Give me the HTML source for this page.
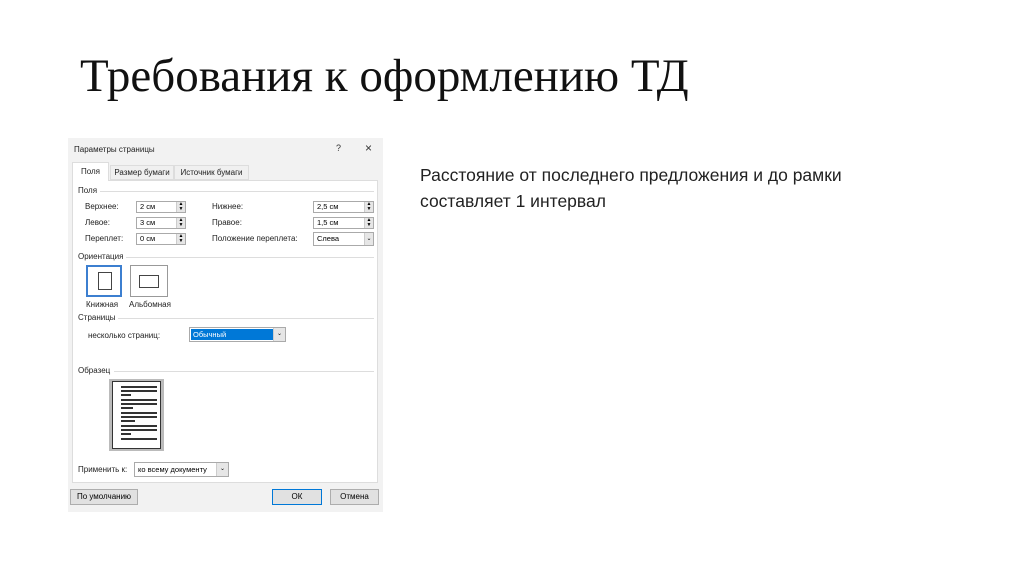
<!DOCTYPE html>
<html><head><meta charset="utf-8"><style>
body{margin:0;width:1024px;height:574px;background:#fff;position:relative;overflow:hidden;font-family:"Liberation Sans",sans-serif}
.a{position:absolute;white-space:nowrap}
h1{position:absolute;left:80px;top:49px;margin:0;font:47px "Liberation Serif",serif;color:#111;white-space:nowrap}
.d{font-size:8px;color:#222}
.inp{position:absolute;background:#fff;border:1px solid #aaa;height:12px;box-sizing:border-box;font-size:7.5px;padding-left:3px;line-height:10px}
.sp{position:absolute;right:0;top:0;width:8px;height:10px;background:#e6e6e6;border-left:1px solid #ccc;font-size:5px;line-height:5px;text-align:center}
.ln{position:absolute;height:1px;background:#ddd}
.btn{position:absolute;background:#e1e1e1;border:1px solid #adadad;box-sizing:border-box;font-size:8px;text-align:center;line-height:14px;height:16px}
.pl{position:absolute;height:2px;background:#333}
</style></head><body>
<h1>Требования к оформлению ТД</h1>
<div class="a" style="left:420px;top:162px;font-size:17.5px;color:#222;line-height:26px">Расстояние от последнего предложения и до рамки<br>составляет 1 интервал</div>

<div class="a" style="left:68px;top:138px;width:315px;height:374px;background:#f2f2f2"></div>
<div class="a d" style="left:74px;top:145px">Параметры страницы</div>
<div class="a" style="left:336px;top:143px;font-size:9px;color:#333">?</div>
<div class="a" style="left:365px;top:141px;font-size:12px;color:#333">×</div>
<div class="a" style="left:72px;top:180px;width:306px;height:303px;background:#fff;border:1px solid #ddd;box-sizing:border-box"></div>
<div class="a d" style="left:72px;top:162px;width:37px;height:19px;background:#fff;border:1px solid #ddd;border-bottom:none;box-sizing:border-box;text-align:center;line-height:18px">Поля</div>
<div class="a d" style="left:110px;top:165px;width:64px;height:15px;background:#f0f0f0;border:1px solid #ddd;box-sizing:border-box;text-align:center;line-height:13px">Размер бумаги</div>
<div class="a d" style="left:174px;top:165px;width:75px;height:15px;background:#f0f0f0;border:1px solid #ddd;box-sizing:border-box;text-align:center;line-height:13px">Источник бумаги</div>

<div class="a d" style="left:78px;top:186px">Поля</div><div class="ln" style="left:100px;top:191px;width:274px"></div>
<div class="a d" style="left:85px;top:202px">Верхнее:</div>
<div class="a d" style="left:85px;top:218px">Левое:</div>
<div class="a d" style="left:85px;top:234px">Переплет:</div>
<div class="inp" style="left:136px;top:201px;width:50px">2 см<div class="sp">▲<br>▼</div></div>
<div class="inp" style="left:136px;top:217px;width:50px">3 см<div class="sp">▲<br>▼</div></div>
<div class="inp" style="left:136px;top:233px;width:50px">0 см<div class="sp">▲<br>▼</div></div>
<div class="a d" style="left:212px;top:202px">Нижнее:</div>
<div class="a d" style="left:212px;top:218px">Правое:</div>
<div class="a d" style="left:212px;top:234px">Положение переплета:</div>
<div class="inp" style="left:313px;top:201px;width:61px">2,5 см<div class="sp">▲<br>▼</div></div>
<div class="inp" style="left:313px;top:217px;width:61px">1,5 см<div class="sp">▲<br>▼</div></div>
<div class="inp" style="left:313px;top:232px;width:61px;height:14px;line-height:12px">Слева<div class="sp" style="height:12px;line-height:12px;font-size:6px">⌄</div></div>

<div class="a d" style="left:78px;top:252px">Ориентация</div><div class="ln" style="left:126px;top:257px;width:248px"></div>
<div class="a" style="left:86px;top:265px;width:36px;height:32px;border:2px solid #3c7fd0;background:#fff;box-sizing:border-box"></div>
<div class="a" style="left:98px;top:272px;width:12px;height:16px;border:1px solid #444;background:#fff"></div>
<div class="a" style="left:130px;top:265px;width:38px;height:32px;border:1px solid #999;box-sizing:border-box"></div>
<div class="a" style="left:139px;top:275px;width:18px;height:11px;border:1px solid #444"></div>
<div class="a d" style="left:86px;top:300px">Книжная</div>
<div class="a d" style="left:129px;top:300px">Альбомная</div>

<div class="a d" style="left:78px;top:313px">Страницы</div><div class="ln" style="left:118px;top:318px;width:256px"></div>
<div class="a d" style="left:88px;top:331px">несколько страниц:</div>
<div class="inp" style="left:189px;top:327px;width:97px;height:15px;padding:1px"><div style="background:#0078d7;color:#fff;width:82px;height:11px;line-height:11px;padding-left:2px">Обычный</div><div class="sp" style="height:13px;line-height:13px;font-size:6px;width:11px">⌄</div></div>

<div class="a d" style="left:78px;top:366px">Образец</div><div class="ln" style="left:114px;top:371px;width:260px"></div>
<div class="a" style="left:109px;top:379px;width:55px;height:72px;background:#bbb"></div>
<div class="a" style="left:112px;top:381px;width:47px;height:66px;background:#fff;border:1px solid #333"></div>
<div class="pl" style="left:121px;top:386px;width:36px"></div><div class="pl" style="left:121px;top:390px;width:36px"></div><div class="pl" style="left:121px;top:394px;width:10px"></div>
<div class="pl" style="left:121px;top:399px;width:36px"></div><div class="pl" style="left:121px;top:403px;width:36px"></div><div class="pl" style="left:121px;top:407px;width:12px"></div>
<div class="pl" style="left:121px;top:412px;width:36px"></div><div class="pl" style="left:121px;top:416px;width:36px"></div><div class="pl" style="left:121px;top:420px;width:14px"></div>
<div class="pl" style="left:121px;top:425px;width:36px"></div><div class="pl" style="left:121px;top:429px;width:36px"></div><div class="pl" style="left:121px;top:433px;width:10px"></div>
<div class="pl" style="left:121px;top:438px;width:36px"></div>

<div class="a d" style="left:78px;top:465px">Применить к:</div>
<div class="inp" style="left:134px;top:462px;width:95px;height:15px;line-height:13px">ко всему документу<div class="sp" style="height:13px;line-height:13px;font-size:6px;width:11px">⌄</div></div>

<div class="btn" style="left:70px;top:489px;width:68px">По умолчанию</div>
<div class="btn" style="left:272px;top:489px;width:50px;border:1px solid #0078d7">ОК</div>
<div class="btn" style="left:330px;top:489px;width:49px">Отмена</div>
</body></html>
